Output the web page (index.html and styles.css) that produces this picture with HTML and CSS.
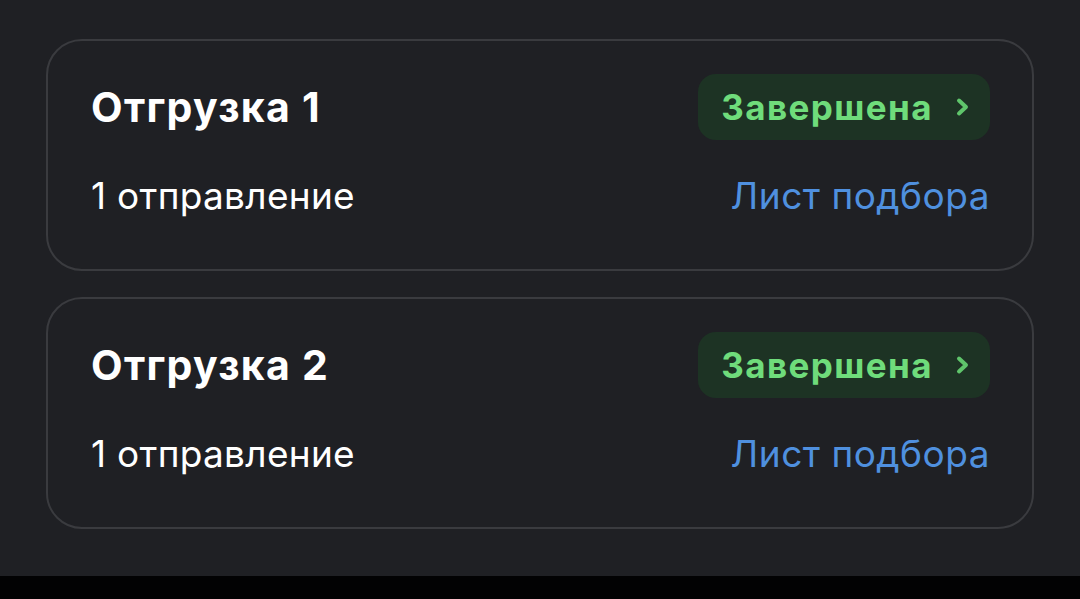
FILE: index.html
```html
<!DOCTYPE html>
<html>
<head>
    <title>Отгрузки</title>
    <link rel="stylesheet" href="styles.css">
</head>
<body>
    <div class="list">
        <div class="card">
            <div class="row">
                <h2 class="title">Отгрузка 1</h2>
                <a class="status" href="#">Завершена
                    <svg class="chevron" viewBox="0 0 16 20" width="16" height="20"><path d="M4 3.5 L11 10 L4 16.5" fill="none" stroke="currentColor" stroke-width="4" stroke-linecap="round" stroke-linejoin="round"/></svg>
                </a>
            </div>
            <div class="row second">
                <span class="count">1 отправление</span>
                <a class="link" href="#">Лист подбора</a>
            </div>
        </div>
        <div class="card">
            <div class="row">
                <h2 class="title">Отгрузка 2</h2>
                <a class="status" href="#">Завершена
                    <svg class="chevron" viewBox="0 0 16 20" width="16" height="20"><path d="M4 3.5 L11 10 L4 16.5" fill="none" stroke="currentColor" stroke-width="4" stroke-linecap="round" stroke-linejoin="round"/></svg>
                </a>
            </div>
            <div class="row second">
                <span class="count">1 отправление</span>
                <a class="link" href="#">Лист подбора</a>
            </div>
        </div>
    </div>
    <div class="navbar"></div>
</body>
</html>
```

FILE: styles.css
```css
body {
    margin: 0;
    padding: 0;
    background-color: #1f2024;
    font-family: Inter, "Noto Sans", sans-serif;
    color: #fff;
}

.list {
    height: 576px;
    box-sizing: border-box;
    padding: 39px 46px 0 46px;
    display: flex;
    flex-direction: column;
    gap: 26px;
}

.card {
    border: 2px solid #3a3b3f;
    border-radius: 36px;
    padding: 33px 42px 52px 43px;
}

.row {
    display: flex;
    justify-content: space-between;
    align-items: center;
    height: 66px;
}

.row.second {
    height: 44px;
    margin-top: 33px;
}

.title {
    margin: 0;
    font-size: 41px;
    font-weight: 700;
    letter-spacing: 1.3px;
}

.status {
    display: flex;
    align-items: center;
    gap: 22px;
    height: 66px;
    box-sizing: border-box;
    padding: 0 19px 0 23px;
    background-color: #1d3324;
    border-radius: 18px;
    color: #6fdc7b;
    font-size: 35px;
    font-weight: 700;
    letter-spacing: 1.4px;
    text-decoration: none;
}

.chevron {
    color: #5fc56b;
}

.count {
    font-size: 37px;
    letter-spacing: 0.3px;
}

.link {
    color: #4f90df;
    font-size: 37px;
    text-decoration: none;
    letter-spacing: 0.5px;
}

.navbar {
    height: 23px;
    background-color: #020203;
}
```
